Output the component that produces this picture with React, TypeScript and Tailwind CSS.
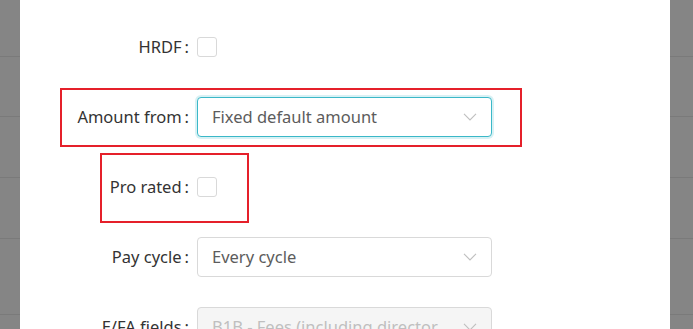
import React from "react";

const stripRows = [57, 60, 61, 61, 76, 20];

function BackdropStrip({ className }: { className: string }) {
  return (
    <div className={`flex flex-col bg-[#858585] ${className}`}>
      {stripRows.map((h, i) => (
        <div key={i} className="shrink-0 border-b border-[#7a7a7a]" style={{ height: h }} />
      ))}
    </div>
  );
}

function Chevron() {
  return (
    <svg width="14" height="8" viewBox="0 0 14 8" fill="none" className="shrink-0">
      <path d="M1 0.8L7 7L13 0.8" stroke="#bfbfbf" strokeWidth="1.1" />
    </svg>
  );
}

function Label({ text }: { text: string }) {
  return (
    <div className="flex w-[177px] shrink-0 items-center justify-end text-[#333333]">
      <span>{text}</span>
      <span className="ml-[3px] mr-[8px]">:</span>
    </div>
  );
}

function Checkbox() {
  return <div className="h-5 w-5 rounded-[3px] border border-[#d9d9d9] bg-white" />;
}

interface SelectProps {
  value: string;
  focused?: boolean;
  disabled?: boolean;
}

function Select({ value, focused, disabled }: SelectProps) {
  return (
    <div
      className={`flex h-10 w-[295px] items-center rounded-[4px] border pl-[14px] pr-[14px] ${
        focused
          ? "border-[#3bb8c8] shadow-[0_0_0_2px_rgba(59,184,200,0.2)]"
          : "border-[#d9d9d9]"
      } ${disabled ? "bg-[#f5f5f5] text-[#bfbfbf]" : "bg-white text-[#5c5c5c]"}`}
    >
      <span className="min-w-0 flex-1 truncate pr-[6px]">{value}</span>
      <Chevron />
    </div>
  );
}

export default function App() {
  return (
    <div className="flex h-[329px] w-[693px] overflow-hidden font-['Noto_Sans',sans-serif] text-[16.5px]">
      <BackdropStrip className="w-[20px] shrink-0" />

      <div className="relative w-[650px] shrink-0 bg-white">
        <div className="flex flex-col gap-[30px] pt-[27px]">
          <div className="flex h-10 items-center">
            <Label text="HRDF" />
            <Checkbox />
          </div>
          <div className="flex h-10 items-center">
            <Label text="Amount from" />
            <Select value="Fixed default amount" focused />
          </div>
          <div className="flex h-10 items-center">
            <Label text="Pro rated" />
            <Checkbox />
          </div>
          <div className="flex h-10 items-center">
            <Label text="Pay cycle" />
            <Select value="Every cycle" />
          </div>
          <div className="flex h-10 items-center">
            <Label text="E/FA fields" />
            <Select value="B1B - Fees (including director fees), commission or bonus" disabled />
          </div>
        </div>

        {/* annotation boxes */}
        <div className="pointer-events-none absolute left-[40px] top-[88px] h-[59px] w-[462px] border-2 border-[#e5202a]" />
        <div className="pointer-events-none absolute left-[80px] top-[153px] h-[70px] w-[149px] border-2 border-[#e5202a]" />
      </div>

      <BackdropStrip className="flex-1" />
    </div>
  );
}
